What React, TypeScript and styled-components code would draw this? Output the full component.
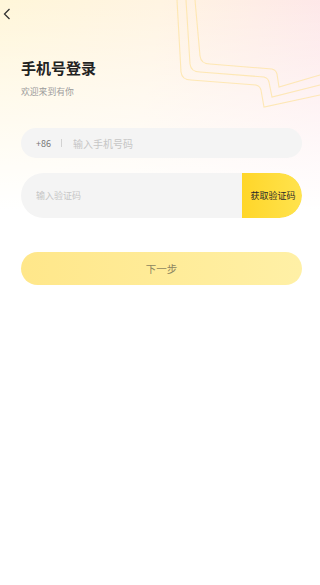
import * as React from 'react';
import styled, { createGlobalStyle } from 'styled-components';

const GlobalStyle = createGlobalStyle`
  html, body {
    margin: 0;
    padding: 0;
    background: #fff;
  }
  body {
    font-family: "Noto Sans CJK SC", "Noto Sans", sans-serif;
  }
`;

const Page = styled.div`
  position: relative;
  min-height: 585px;
  overflow: hidden;
  background-color: #fff;
  background-image: linear-gradient(
      180deg,
      rgba(255, 255, 255, 0) 0%,
      rgba(255, 255, 255, 0.55) 110px,
      #fff 210px
    ),
    linear-gradient(100deg, #fff6d9 0%, #fff4e2 45%, #fde5ea 100%);
  background-size: 100% 220px, 100% 220px;
  background-repeat: no-repeat;
`;

const Deco = styled.svg`
  position: absolute;
  top: 0;
  left: 160px;
  width: 160px;
  height: 120px;
  pointer-events: none;
`;

const TopBar = styled.div`
  position: relative;
  height: 27px;
  display: flex;
  align-items: center;
  padding-left: 1px;
`;

const BackButton = styled.button`
  border: 0;
  background: transparent;
  padding: 0;
  width: 12px;
  height: 14px;
  display: flex;
  align-items: center;
  justify-content: center;
  cursor: pointer;
`;

const Content = styled.div`
  position: relative;
  padding: 33px 18px 0 21px;
  display: flex;
  flex-direction: column;
`;

const Title = styled.h1`
  margin: 0;
  font-size: 15px;
  line-height: 15px;
  font-weight: 700;
  color: #222;
`;

const Subtitle = styled.p`
  margin: 11px 0 0;
  font-size: 8.8px;
  line-height: 12px;
  color: #9c9c9c;
`;

const Field = styled.div<{ $height: number; $gap: number }>`
  margin-top: ${(p) => p.$gap}px;
  height: ${(p) => p.$height}px;
  border-radius: ${(p) => p.$height / 2}px;
  background: #f4f4f4;
  display: flex;
  align-items: center;
  overflow: hidden;
`;

const Prefix = styled.span`
  padding-left: 15px;
  font-size: 9px;
  color: #777;
`;

const Divider = styled.span`
  width: 1px;
  height: 8px;
  background: #d2d2d2;
  margin: 0 11px 0 10px;
`;

const Input = styled.input<{ $size: number; $pad: number }>`
  flex: 1;
  min-width: 0;
  height: 100%;
  border: 0;
  outline: none;
  background: transparent;
  padding: 0 0 0 ${(p) => p.$pad}px;
  font-family: inherit;
  font-size: ${(p) => p.$size}px;
  color: #333;
  &::placeholder {
    color: #c6c6c6;
  }
`;

const CodeButton = styled.button`
  width: 60px;
  height: 100%;
  border: 0;
  padding: 0 0 0 2px;
  border-radius: 0 22.5px 22.5px 0;
  background: linear-gradient(90deg, #ffd629 0%, #ffe34e 100%);
  font-family: inherit;
  font-size: 9px;
  color: #2a2a2a;
  cursor: pointer;
`;

const NextButton = styled.button`
  margin-top: 34px;
  height: 33px;
  border: 0;
  border-radius: 16.5px;
  background: linear-gradient(90deg, #ffe78a 0%, #fff0a6 100%);
  font-family: inherit;
  font-size: 10.5px;
  color: #8d8560;
  cursor: pointer;
`;

export default function App() {
  return (
    <>
      <GlobalStyle />
      <Page>
        <Deco viewBox="0 0 160 120" fill="none">
          <g stroke="#fde3a0" strokeOpacity="0.75" strokeWidth="1.1">
            <path d="M35 0 L40 56 Q41 64 50 64 L112 69 Q116 70 117 74 L119 87 L160 75" />
            <path d="M26 0 L30 64 Q31 72 40 72 L104 77 Q108 78 109 82 L112 97 L160 85" />
            <path d="M17 0 L21 72 Q22 80 31 80 L96 85 Q100 86 101 90 L104 107 L160 95" />
          </g>
        </Deco>
        <TopBar>
          <BackButton aria-label="返回">
            <svg width="8" height="12" viewBox="0 0 8 12">
              <polyline
                points="6.5,1 1.5,6 6.5,11"
                fill="none"
                stroke="#333"
                strokeWidth="1.3"
              />
            </svg>
          </BackButton>
        </TopBar>
        <Content>
          <Title>手机号登录</Title>
          <Subtitle>欢迎来到有你</Subtitle>
          <Field $height={30} $gap={30}>
            <Prefix>+86</Prefix>
            <Divider />
            <Input $size={10} $pad={0} placeholder="输入手机号码" />
          </Field>
          <Field $height={45} $gap={15}>
            <Input $size={9} $pad={15} placeholder="输入验证码" />
            <CodeButton>获取验证码</CodeButton>
          </Field>
          <NextButton>下一步</NextButton>
        </Content>
      </Page>
    </>
  );
}
